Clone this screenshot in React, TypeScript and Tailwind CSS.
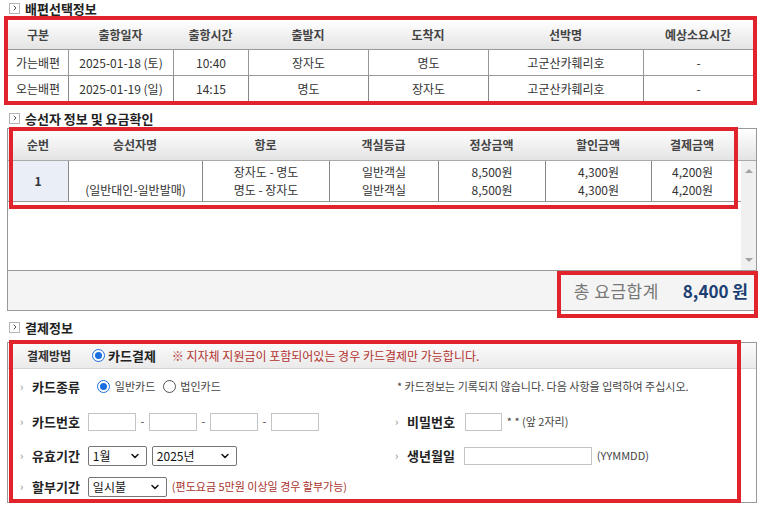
import { ChevronDown, ChevronRight } from "lucide-react";

const RED = "border-[#e1232b]";

const Title = ({ children }: { children: string }) => (
  <div className="flex items-center h-[16px] pl-[9px] gap-[5px]">
    <span className="w-[11px] h-[11px] border border-[#b5b5b5] flex items-center justify-center bg-white">
      <ChevronRight className="w-[8px] h-[8px] text-[#555]" strokeWidth={3} />
    </span>
    <span className="text-[13px] font-bold text-[#222] leading-none">{children}</span>
  </div>
);

const Radio = ({ checked }: { checked?: boolean }) =>
  checked ? (
    <span className="shrink-0 w-[13px] h-[13px] rounded-full border border-[#1a6fe0] bg-white flex items-center justify-center">
      <span className="block w-[7px] h-[7px] rounded-full bg-[#1a6fe0]" />
    </span>
  ) : (
    <span className="shrink-0 block w-[13px] h-[13px] rounded-full border border-[#555] bg-white" />
  );

const Select = ({ value, w }: { value: string; w: string }) => (
  <div className={`${w} h-[20px] border border-[#767676] rounded-[2px] bg-white flex items-center justify-between pl-[4px] pr-[5px] text-[12px] text-[#111]`}>
    <span className="leading-none">{value}</span>
    <ChevronDown className="w-[12px] h-[12px] text-[#111]" strokeWidth={3} />
  </div>
);

const Input = ({ w }: { w: string }) => <div className={`${w} h-[18px] border border-[#c4c4c4] bg-white`} />;

const Label = ({ children }: { children: string }) => (
  <>
    <span className="w-[12px] text-[11px] text-[#888] leading-none">›</span>
    <span className="text-[13px] font-bold text-[#222] leading-none">{children}</span>
  </>
);

const head1 = ["구분", "출항일자", "출항시간", "출발지", "도착지", "선박명", "예상소요시간"];
const rows1 = [
  ["가는배편", "2025-01-18 (토)", "10:40", "장자도", "명도", "고군산카훼리호", "-"],
  ["오는배편", "2025-01-19 (일)", "14:15", "명도", "장자도", "고군산카훼리호", "-"],
];
const head2 = ["순번", "승선자명", "항로", "객실등급", "정상금액", "할인금액", "결제금액"];

export default function App() {
  return (
    <div className="w-[764px] h-[509px] bg-white overflow-hidden font-['Noto_Sans_CJK_KR',sans-serif] text-[#333]">
      <Title>배편선택정보</Title>
      <div className={`ml-[4px] w-[753px] border-4 ${RED}`}>
        <div className="grid grid-cols-[60px_105px_75px_120px_120px_155px_110px] text-[12px]">
          {head1.map((h) => (
            <div key={h} className="h-[30px] flex items-center justify-center font-bold text-[#444] bg-linear-to-b from-white to-[#e4e4e4] border-b border-[#999]">
              {h}
            </div>
          ))}
          {rows1.map((r, i) =>
            r.map((c, j) => (
              <div
                key={i + "-" + j}
                className={`${i === 0 ? "h-[26px] border-b border-[#999]" : "h-[25px]"} flex items-center justify-center ${j > 0 ? "border-l border-[#888]" : ""}`}
              >
                {c}
              </div>
            ))
          )}
        </div>
      </div>

      <div className="mt-[5px]">
        <Title>승선자 정보 및 요금확인</Title>
      </div>
      <div className="relative ml-[7px] mt-[2px] w-[750px] border border-[#999]">
        <div className="grid grid-cols-[60px_134px_127px_109px_107px_106px_82px_1fr] h-[32px] bg-linear-to-b from-white to-[#e4e4e4] border-b border-[#aaa] text-[12px] font-bold text-[#444]">
          {head2.map((h) => (
            <div key={h} className="flex items-center justify-center">{h}</div>
          ))}
          <div />
        </div>
        <div className="flex h-[109px]">
          <div className="w-[733px]">
            <div className="grid grid-cols-[60px_134px_127px_109px_107px_106px_82px] h-[41px] border-b border-[#999] text-[12px] leading-[18px]">
              <div className="flex items-center justify-center bg-[#e9eef7] font-bold">1</div>
              <div className="border-l border-[#888] flex flex-col items-center justify-center">
                <span>&nbsp;</span>
                <span>(일반대인-일반발매)</span>
              </div>
              {[
                ["장자도 - 명도", "명도 - 장자도"],
                ["일반객실", "일반객실"],
                ["8,500원", "8,500원"],
                ["4,300원", "4,300원"],
                ["4,200원", "4,200원"],
              ].map((c, k) => (
                <div key={k} className="border-l border-[#888] flex flex-col items-center justify-center">
                  <span>{c[0]}</span>
                  <span>{c[1]}</span>
                </div>
              ))}
            </div>
          </div>
          <div className="ml-auto w-[15px] bg-[#f0f0f0] flex flex-col items-center justify-between py-[8px]">
            <span className="w-0 h-0 border-l-[4px] border-r-[4px] border-b-[4px] border-l-transparent border-r-transparent border-b-[#a3a3a3]" />
            <span className="w-0 h-0 border-l-[4px] border-r-[4px] border-t-[4px] border-l-transparent border-r-transparent border-t-[#a3a3a3]" />
          </div>
        </div>
        <div className="h-[40px] border-t border-[#999] bg-[#f4f4f4] flex items-center justify-end pr-[8px] gap-[24px]">
          <span className="text-[17px] text-[#777] tracking-[0.5px]">총 요금합계</span>
          <span className="text-[17px] font-bold text-[#1b3f73]">8,400 원</span>
        </div>
        <div className={`absolute left-[1px] top-[-2px] w-[729px] h-[82px] border-4 ${RED}`} />
        <div className={`absolute left-[549px] top-[142px] w-[201px] h-[47px] border-4 ${RED}`} />
      </div>

      <div className="mt-[8px]">
        <Title>결제정보</Title>
      </div>
      <div className="relative ml-[7px] mt-[7px] w-[750px] border border-[#999]">
        <div className="h-[26px] flex items-center bg-linear-to-b from-[#fbfbfb] to-[#eaeaea] border-b border-[#d5d5d5] pl-[19px]">
          <span className="text-[12px] font-bold text-[#333] w-[65px]">결제방법</span>
          <Radio checked />
          <span className="ml-[3px] text-[13px] font-bold text-[#222]">카드결제</span>
          <span className="ml-[16px] text-[12px] text-[#b3322e]">※ 지자체 지원금이 포함되어있는 경우 카드결제만 가능합니다.</span>
        </div>

        <div className="grid grid-cols-[387px_1fr]">
          <div className="h-[34px] flex items-center pl-[12px]">
            <Label>카드종류</Label>
            <span className="ml-[17px] flex"><Radio checked /></span>
            <span className="ml-[5px] text-[11px] text-[#444]">일반카드</span>
            <span className="ml-[8px] flex"><Radio /></span>
            <span className="ml-[4px] text-[11px] text-[#444]">법인카드</span>
          </div>
          <div className="h-[34px] flex items-center pl-[2px] text-[11px] text-[#444]">
            * 카드정보는 기록되지 않습니다. 다음 사항을 입력하여 주십시오.
          </div>

          <div className="h-[37px] flex items-center pl-[12px]">
            <Label>카드번호</Label>
            <div className="ml-[8px] flex items-center gap-[4px] text-[11px] text-[#444]">
              <Input w="w-[48px]" />
              <span className="w-[5px] text-center">-</span>
              <Input w="w-[48px]" />
              <span className="w-[5px] text-center">-</span>
              <Input w="w-[48px]" />
              <span className="w-[5px] text-center">-</span>
              <Input w="w-[48px]" />
            </div>
          </div>
          <div className="h-[37px] flex items-center">
            <Label>비밀번호</Label>
            <span className="ml-[10px]"><Input w="w-[37px]" /></span>
            <span className="ml-[5px] text-[11px] text-[#444]">* * (앞 2자리)</span>
          </div>

          <div className="h-[31px] flex items-center pl-[12px]">
            <Label>유효기간</Label>
            <div className="ml-[8px] flex items-center gap-[5px]">
              <Select value="1월" w="w-[59px]" />
              <Select value="2025년" w="w-[85px]" />
            </div>
          </div>
          <div className="h-[31px] flex items-center">
            <Label>생년월일</Label>
            <span className="ml-[9px]"><Input w="w-[128px]" /></span>
            <span className="ml-[5px] text-[11px] text-[#444]">(YYMMDD)</span>
          </div>

          <div className="h-[31px] flex items-center pl-[12px]">
            <Label>할부기간</Label>
            <span className="ml-[8px]"><Select value="일시불" w="w-[79px]" /></span>
            <span className="ml-[5px] text-[11px] text-[#a8312c]">(편도요금 5만원 이상일 경우 할부가능)</span>
          </div>
          <div />
        </div>
        <div className={`absolute left-[1px] top-[-3px] w-[732px] h-[163px] border-4 ${RED}`} />
      </div>
    </div>
  );
}
